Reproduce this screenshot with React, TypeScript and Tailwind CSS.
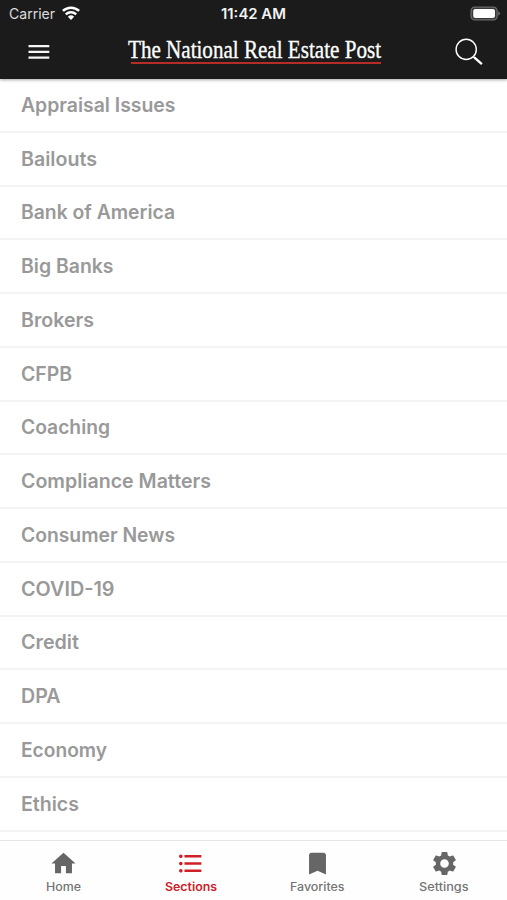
import React from "react";

const sections: [string, number][] = [
  ["Appraisal Issues", 154.5],
  ["Bailouts", 76],
  ["Bank of America", 154],
  ["Big Banks", 92.5],
  ["Brokers", 73],
  ["CFPB", 51],
  ["Coaching", 89],
  ["Compliance Matters", 190],
  ["Consumer News", 154],
  ["COVID-19", 93.5],
  ["Credit", 58],
  ["DPA", 39.5],
  ["Economy", 86],
  ["Ethics", 58],
];

const tabs = [
  { label: "Home", width: 35, path: "M10 20v-6h4v6h5v-8h3L12 3 2 12h3v8z" },
  {
    label: "Sections",
    width: 52,
    active: true,
    path: "M4 10.5c-.83 0-1.5.67-1.5 1.5s.67 1.5 1.5 1.5 1.5-.67 1.5-1.5-.67-1.5-1.5-1.5zm0-6c-.83 0-1.5.67-1.5 1.5S3.17 7.5 4 7.5 5.5 6.83 5.5 6 4.83 4.5 4 4.5zm0 12c-.83 0-1.5.68-1.5 1.5s.68 1.5 1.5 1.5 1.5-.68 1.5-1.5-.67-1.5-1.5-1.5zM7 19h14v-2H7v2zm0-6h14v-2H7v2zm0-8v2h14V5H7z",
  },
  { label: "Favorites", width: 54.5, path: "M17 3H7c-1.1 0-1.99.9-1.99 2L5 21l7-3 7 3V5c0-1.1-.9-2-2-2z" },
  {
    label: "Settings",
    width: 49.5,
    path: "M19.14 12.94c.04-.3.06-.61.06-.94 0-.32-.02-.64-.07-.94l2.03-1.58c.18-.14.23-.41.12-.61l-1.92-3.32c-.12-.22-.37-.29-.59-.22l-2.39.96c-.5-.38-1.03-.7-1.62-.94l-.36-2.54c-.04-.24-.24-.41-.48-.41h-3.84c-.24 0-.43.17-.47.41l-.36 2.54c-.59.24-1.13.57-1.62.94l-2.39-.96c-.22-.08-.47 0-.59.22L2.74 8.87c-.12.21-.08.47.12.61l2.03 1.58c-.05.3-.09.63-.09.94s.02.64.07.94l-2.03 1.58c-.18.14-.23.41-.12.61l1.92 3.32c.12.22.37.29.59.22l2.39-.96c.5.38 1.03.7 1.62.94l.36 2.54c.05.24.24.41.48.41h3.84c.24 0 .44-.17.47-.41l.36-2.54c.59-.24 1.13-.56 1.62-.94l2.39.96c.22.08.47 0 .59-.22l1.92-3.32c.12-.22.07-.47-.12-.61l-2.01-1.58zM12 15.6c-1.98 0-3.6-1.62-3.6-3.6s1.62-3.6 3.6-3.6 3.6 1.62 3.6 3.6-1.62 3.6-3.6 3.6z",
  },
];

/** A text run fitted to an exact width. */
function FittedText({ text, width, height, baseline, className }: {
  text: string; width: number; height: number; baseline: number; className: string;
}) {
  return (
    <svg width={width} height={height} className={`block overflow-visible ${className}`}>
      <text x="0" y={baseline} textLength={width} lengthAdjust="spacingAndGlyphs" fill="currentColor">
        {text}
      </text>
    </svg>
  );
}

function StatusBar() {
  return (
    <div className="grid h-[27px] grid-cols-3 items-center pl-[9px] pr-[7px] text-[#f2f2f2]">
      <div className="flex items-center gap-[7px]">
        <FittedText text="Carrier" width={46} height={20} baseline={15} className="text-[14.5px] text-[#dcdcdc]" />
        <svg width="18" height="14" viewBox="0 0 18 14" className="-mt-px">
          <path d="M.9 4.9a11.8 11.8 0 0 1 16.2 0" fill="none" stroke="#fff" strokeWidth="2.6" />
          <path d="M3.8 8.3a7.5 7.5 0 0 1 10.4 0" fill="none" stroke="#fff" strokeWidth="2.4" />
          <path d="M9 13.9 5.9 10.8a4.5 4.5 0 0 1 6.2 0z" fill="#fff" />
        </svg>
      </div>
      <div className="flex justify-center pr-[2px]">
        <FittedText text="11:42 AM" width={65} height={20} baseline={15} className="text-[14px] font-semibold" />
      </div>
      <div className="flex justify-end">
        <svg width="30" height="15" viewBox="0 0 30 15" className="-mt-px">
          <rect x="1.1" y="1.1" width="26" height="12.8" rx="3.6" fill="#383838" stroke="#6b6b6b" strokeWidth="1.3" />
          <rect x="3.2" y="3.1" width="21.8" height="8.9" rx="2" fill="#fff" />
          <path d="M28.3 5.2q1.6.9 1.6 2.3t-1.6 2.3z" fill="#777" />
        </svg>
      </div>
    </div>
  );
}

export default function App() {
  return (
    <div className="flex h-[900px] w-[507px] flex-col overflow-hidden bg-white font-['Inter','Liberation_Sans',sans-serif]">
      <header className="z-10 h-[79px] shrink-0 bg-[#1b1b1b] shadow-[0_1px_3px_rgba(0,0,0,0.35)]">
        <StatusBar />
        <div className="flex h-[50px] items-center justify-between pl-[28px] pr-[23px]">
          <button aria-label="Menu">
            <svg width="22" height="16" viewBox="0 0 22 16" fill="#f5f5f5">
              <path d="M.5.9h20.8v2.3H.5zM.5 6.7h20.8V9H.5zM.5 12.5h20.8v2.3H.5z" />
            </svg>
          </button>
          <div className="ml-[3px] flex w-[254px] flex-col items-end pb-[3px]">
            <FittedText
              text="The National Real Estate Post"
              width={253}
              height={24}
              baseline={19.5}
              className="font-['Liberation_Serif',serif] text-[25.5px] text-white [stroke:white] [stroke-width:0.35px]"
            />
            <div className="h-[2px] w-[250px] bg-[#b62d28]" />
          </div>
          <button aria-label="Search">
            <svg width="30" height="30" viewBox="0 0 30 30" fill="none" stroke="#fff">
              <circle cx="12.2" cy="12.4" r="10.1" strokeWidth="1.4" />
              <path d="m19.4 19.6 2 2" strokeWidth="1.5" />
              <path d="m20.5 20.7 7.4 6.5" strokeWidth="2.4" />
            </svg>
          </button>
        </div>
      </header>

      <main className="min-h-0 flex-1 overflow-hidden">
        <ul>
          {sections.map(([name, width]) => (
            <li key={name} className="flex h-[53.75px] items-center border-b-2 border-[#f4f4f4] pl-[21px]">
              <FittedText text={name} width={width} height={26} baseline={20} className="text-[19.5px] font-semibold text-[#999]" />
            </li>
          ))}
        </ul>
      </main>

      <nav className="grid h-[60px] shrink-0 grid-cols-4 border-t border-[#e6e6e6] bg-[#fefefe]">
        {tabs.map((tab) => (
          <button
            key={tab.label}
            className={`flex flex-col items-center pl-px pt-[8px] ${tab.active ? "text-[#cf2027]" : "text-[#666]"}`}
          >
            <svg width="29" height="29" viewBox="0 0 24 24" fill="currentColor">
              <path d={tab.path} />
            </svg>
            <FittedText
              text={tab.label}
              width={tab.width}
              height={16}
              baseline={12.5}
              className={`text-[11.5px] ${tab.active ? "font-semibold" : "font-medium text-[#747474]"}`}
            />
          </button>
        ))}
      </nav>
    </div>
  );
}
